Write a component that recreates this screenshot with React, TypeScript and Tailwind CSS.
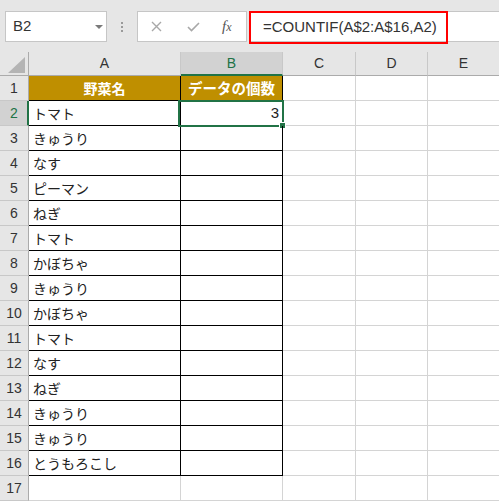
const cells = [
  "野菜名",
  "トマト",
  "きゅうり",
  "なす",
  "ピーマン",
  "ねぎ",
  "トマト",
  "かぼちゃ",
  "きゅうり",
  "かぼちゃ",
  "トマト",
  "なす",
  "ねぎ",
  "きゅうり",
  "きゅうり",
  "とうもろこし",
  "",
];

const sans = "font-['Liberation_Sans',Arial,sans-serif]";
const jp = "font-['Noto_Sans_CJK_JP',sans-serif]";

function TopBar() {
  return (
    <div className="flex h-[52px] items-start bg-[#e6e6e6] pl-[5px] pt-[11px]">
      <div className="relative flex h-[31px] w-[102px] items-center border border-[#c6c6c6] bg-white pl-[7px] text-[15px] text-[#333]">
        B2
        <svg className="absolute left-[89px] top-[13px]" width="8" height="4" viewBox="0 0 8 4">
          <path d="M0 0H8L4 4Z" fill="#7a7a7a" />
        </svg>
      </div>
      <div className="flex h-[31px] w-[30px] flex-col items-center justify-center gap-[2px]">
        <div className="h-[2px] w-[2px] bg-[#9a9a9a]" />
        <div className="h-[2px] w-[2px] bg-[#9a9a9a]" />
        <div className="h-[2px] w-[2px] bg-[#9a9a9a]" />
      </div>
      <div className="flex h-[31px] w-[110px] items-center border border-[#c6c6c6] bg-white">
        <svg className="ml-[13px]" width="11" height="11" viewBox="0 0 11 11">
          <path d="M1 1L10 10M10 1L1 10" stroke="#a8a8a8" strokeWidth="1.4" />
        </svg>
        <svg className="ml-[25px]" width="13" height="10" viewBox="0 0 13 10">
          <path d="M1 5L4.5 8.5L12 1" stroke="#a8a8a8" strokeWidth="1.6" fill="none" />
        </svg>
        <span className="ml-[22px] font-['Liberation_Serif',serif] text-[15px] italic text-[#555]">
          f<span className="text-[12px]">x</span>
        </span>
      </div>
      <div className="ml-[2px] flex h-[31px] flex-1 border-y border-[#c6c6c6] bg-white">
        <div className="-mb-[2px] -mt-[1px] flex h-[33px] w-[199px] items-center border-2 border-[#ff0000] pl-[12px] text-[15px] text-[#333]">
          =COUNTIF(A$2:A$16,A2)
        </div>
      </div>
    </div>
  );
}

function HeaderRow() {
  return (
    <div className="flex h-[24px] text-[14px] text-[#333]">
      <div className="relative w-[29px] border-b border-r border-[#ababab] bg-[#e6e6e6]">
        <svg className="absolute left-[8px] top-[5px]" width="17" height="16" viewBox="0 0 17 16">
          <path d="M17 0V16H0Z" fill="#b4b4b4" />
        </svg>
      </div>
      <div className="flex w-[152px] items-center justify-center border-b border-r border-b-[#ababab] border-r-[#c8c8c8] bg-[#e6e6e6]">
        A
      </div>
      <div className="flex w-[102px] items-center justify-center border-b-2 border-r border-b-[#217346] border-r-[#c8c8c8] bg-[#d2d2d2] pt-[1px] text-[#217346]">
        B
      </div>
      <div className="flex w-[73px] items-center justify-center border-b border-r border-b-[#ababab] border-r-[#c8c8c8] bg-[#e6e6e6]">
        C
      </div>
      <div className="flex w-[72px] items-center justify-center border-b border-r border-b-[#ababab] border-r-[#c8c8c8] bg-[#e6e6e6]">
        D
      </div>
      <div className="flex w-[71px] items-center justify-center border-b border-b-[#ababab] bg-[#e6e6e6]">
        E
      </div>
    </div>
  );
}

function Row({ n, text }: { n: number; text: string }) {
  const inTable = n <= 16;
  const head = n === 1;
  const edge = inTable ? "border-black" : "border-[#d4d4d4]";
  return (
    <div className="flex h-[25px]">
      <div
        className={
          n === 2
            ? "flex w-[29px] items-center justify-center border-b border-r-2 border-b-[#c8c8c8] border-r-[#217346] bg-[#d2d2d2] pl-[1px] text-[14px] text-[#217346]"
            : "flex w-[29px] items-center justify-center border-b border-r border-b-[#c8c8c8] border-r-[#ababab] bg-[#e6e6e6] text-[14px] text-[#333]"
        }
      >
        {n}
      </div>
      <div
        className={`flex w-[152px] items-center border-b border-r ${edge} ${jp} text-[14px] ${
          head ? "justify-center bg-[#bf8f00] font-bold text-white" : "pl-[4px] text-[#222]"
        }`}
      >
        {text}
      </div>
      <div
        className={`relative flex w-[102px] items-center border-b border-r ${edge} ${
          head ? `justify-center bg-[#bf8f00] ${jp} text-[14.5px] font-bold text-white` : "justify-end pr-[3px] text-[15px] text-[#222]"
        }`}
      >
        {head ? "データの個数" : n === 2 ? "3" : ""}
        {n === 2 && (
          <>
            <div className="absolute -left-[3px] -top-[1px] h-[27px] w-[106px] border-2 border-[#217346]" />
            <div className="absolute left-[98px] top-[21px] h-[7px] w-[7px] border border-white bg-[#217346]" />
          </>
        )}
      </div>
      <div className="w-[73px] border-b border-r border-[#d4d4d4]" />
      <div className="w-[72px] border-b border-r border-[#d4d4d4]" />
      <div className="w-[71px] border-b border-[#d4d4d4]" />
    </div>
  );
}

export default function App() {
  return (
    <div className={`h-[502px] w-[499px] overflow-hidden bg-white ${sans}`}>
      <TopBar />
      <HeaderRow />
      {cells.map((text, i) => (
        <Row key={i} n={i + 1} text={text} />
      ))}
    </div>
  );
}
